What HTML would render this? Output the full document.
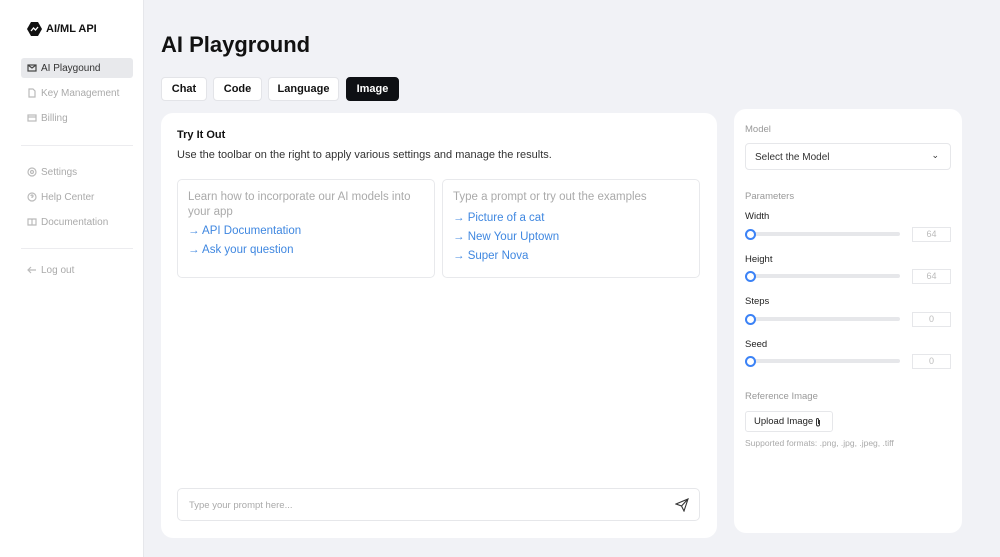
<!DOCTYPE html>
<html><head><style>
*{box-sizing:border-box;margin:0;padding:0}
body{width:1000px;height:557px;background:#f1f2f6;font-family:"Liberation Sans",sans-serif;position:relative;overflow:hidden;color:#111}
.a{position:absolute}
.side{left:0;top:0;width:144px;height:557px;background:#fff;border-right:1px solid #e6e7eb}
.nav{left:21px;width:112px;height:20px;font-size:10px;color:#aaa;display:flex;align-items:center;padding-left:6px;gap:4px}
.nav svg{width:10px;height:10px;stroke:#bbb;fill:none;stroke-width:1.2}
.hr{left:21px;width:112px;height:1px;background:#ececef}
.tab{top:77px;height:24px;background:#fff;border:1px solid #e3e4e8;border-radius:4px;font-size:11px;font-weight:bold;display:flex;align-items:center;justify-content:center}
.card{background:#fff;border-radius:12px}
.box{border:1px solid #e8e9ec;border-radius:5px;padding:10px 10px;font-size:11.5px;color:#aaa;line-height:15px}
.lk{color:#3f87e0;font-size:11.5px;margin-top:4px}
.lbl{font-size:9.5px;color:#999}
.sl{font-size:9.5px;color:#222}
.tr{left:747px;width:153px;height:4px;background:#e6e7ea;border-radius:2px}
.th{left:745px;width:11px;height:11px;border:2.5px solid #3b82f6;border-radius:50%;background:#fff}
.nb{left:912px;width:39px;height:15px;border:1px solid #e6e7ea;font-size:9px;color:#bbb;text-align:center;line-height:13px}
</style></head><body>
<div class="a side"></div>
<div class="a" style="left:27px;top:22px;display:flex;align-items:center;gap:4px;font-weight:bold;font-size:11px">
<svg width="15" height="14" viewBox="0 0 15 14"><polygon points="4,0 11,0 15,7 11,14 4,14 0,7" fill="#111"/><path d="M4 9 L6.5 6 L8.5 8 L11 5" stroke="#fff" stroke-width="1.3" fill="none"/></svg>AI/ML API</div>
<div class="a nav" style="top:58px;background:#e8e9ec;border-radius:3px;color:#333"><svg viewBox="0 0 10 10" style="stroke:#444"><rect x="1" y="2" width="8" height="6"/><path d="M1 2l4 3 4-3"/></svg>AI Playgound</div>
<div class="a nav" style="top:83px"><svg viewBox="0 0 10 10"><path d="M2 1h4l2 2v6H2z"/></svg>Key Management</div>
<div class="a nav" style="top:108px"><svg viewBox="0 0 10 10"><rect x="1" y="2" width="8" height="6"/><path d="M1 4h8"/></svg>Billing</div>
<div class="a hr" style="top:145px"></div>
<div class="a nav" style="top:162px"><svg viewBox="0 0 10 10"><circle cx="5" cy="5" r="4"/><circle cx="5" cy="5" r="1.5"/></svg>Settings</div>
<div class="a nav" style="top:187px"><svg viewBox="0 0 10 10"><circle cx="5" cy="5" r="4"/><path d="M4 4a1 1 0 1 1 1 1v1"/></svg>Help Center</div>
<div class="a nav" style="top:212px"><svg viewBox="0 0 10 10"><path d="M1 2h3.5l.5 1 .5-1H9v6H1zM5 3v5"/></svg>Documentation</div>
<div class="a hr" style="top:248px"></div>
<div class="a nav" style="top:260px"><svg viewBox="0 0 10 10"><path d="M9 5H1M4 2L1 5l3 3"/></svg>Log out</div>

<div class="a" style="left:161px;top:32px;font-size:22px;font-weight:bold">AI Playground</div>
<div class="a tab" style="left:161px;width:46px">Chat</div>
<div class="a tab" style="left:213px;width:49px">Code</div>
<div class="a tab" style="left:268px;width:71px">Language</div>
<div class="a tab" style="left:346px;width:53px;background:#0e1014;color:#fff;border-color:#0e1014">Image</div>

<div class="a card" style="left:161px;top:113px;width:556px;height:425px"></div>
<div class="a" style="left:177px;top:129px;font-size:11px;font-weight:bold">Try It Out</div>
<div class="a" style="left:177px;top:149px;font-size:11px;color:#333">Use the toolbar on the right to apply various settings and manage the results.</div>
<div class="a box" style="left:177px;top:179px;width:258px;height:99px">Learn how to incorporate our AI models into your app<div class="lk">→ API Documentation</div><div class="lk">→ Ask your question</div></div>
<div class="a box" style="left:442px;top:179px;width:258px;height:99px">Type a prompt or try out the examples<div class="lk" style="margin-top:6px">→ Picture of a cat</div><div class="lk">→ New Your Uptown</div><div class="lk">→ Super Nova</div></div>
<div class="a" style="left:177px;top:488px;width:523px;height:33px;border:1px solid #e6e7ea;border-radius:5px;font-size:9.5px;color:#aaa;padding:11px 11px"><span>Type your prompt here...</span>
<svg class="a" style="right:10px;top:9px" width="14" height="14" viewBox="0 0 14 14" fill="none" stroke="#333" stroke-width="1.1"><path d="M1 6L13 1 9 13 6.5 8zM6.5 8L13 1"/></svg></div>

<div class="a card" style="left:734px;top:109px;width:228px;height:424px"></div>
<div class="a lbl" style="left:745px;top:124px">Model</div>
<div class="a" style="left:745px;top:143px;width:206px;height:27px;border:1px solid #e6e7ea;border-radius:4px;font-size:10px;color:#333;padding:8px 9px">Select the Model<span class="a" style="right:11px;top:6px;font-size:9px">⌄</span></div>
<div class="a lbl" style="left:745px;top:191px">Parameters</div>
<div class="a sl" style="left:745px;top:211px">Width</div><div class="a tr" style="top:232px"></div><div class="a th" style="top:229px"></div><div class="a nb" style="top:227px">64</div>
<div class="a sl" style="left:745px;top:254px">Height</div><div class="a tr" style="top:274px"></div><div class="a th" style="top:271px"></div><div class="a nb" style="top:269px">64</div>
<div class="a sl" style="left:745px;top:296px">Steps</div><div class="a tr" style="top:317px"></div><div class="a th" style="top:314px"></div><div class="a nb" style="top:312px">0</div>
<div class="a sl" style="left:745px;top:339px">Seed</div><div class="a tr" style="top:359px"></div><div class="a th" style="top:356px"></div><div class="a nb" style="top:354px">0</div>
<div class="a lbl" style="left:745px;top:391px">Reference Image</div>
<div class="a" style="left:745px;top:411px;width:88px;height:21px;border:1px solid #e6e7ea;border-radius:3px;font-size:9.5px;color:#222;padding:5px 8px;white-space:nowrap;display:flex;align-items:center;gap:2px">Upload Image <svg width="6" height="10" viewBox="0 0 6 10" fill="none" stroke="#333" stroke-width="1"><path d="M4.5 3v4.5a1.5 1.5 0 0 1-3 0V2.5a1 1 0 0 1 2 0V7"/></svg></div>
<div class="a" style="left:745px;top:438px;font-size:8.5px;color:#aaa">Supported formats: .png, .jpg, .jpeg, .tiff</div>
</body></html>
